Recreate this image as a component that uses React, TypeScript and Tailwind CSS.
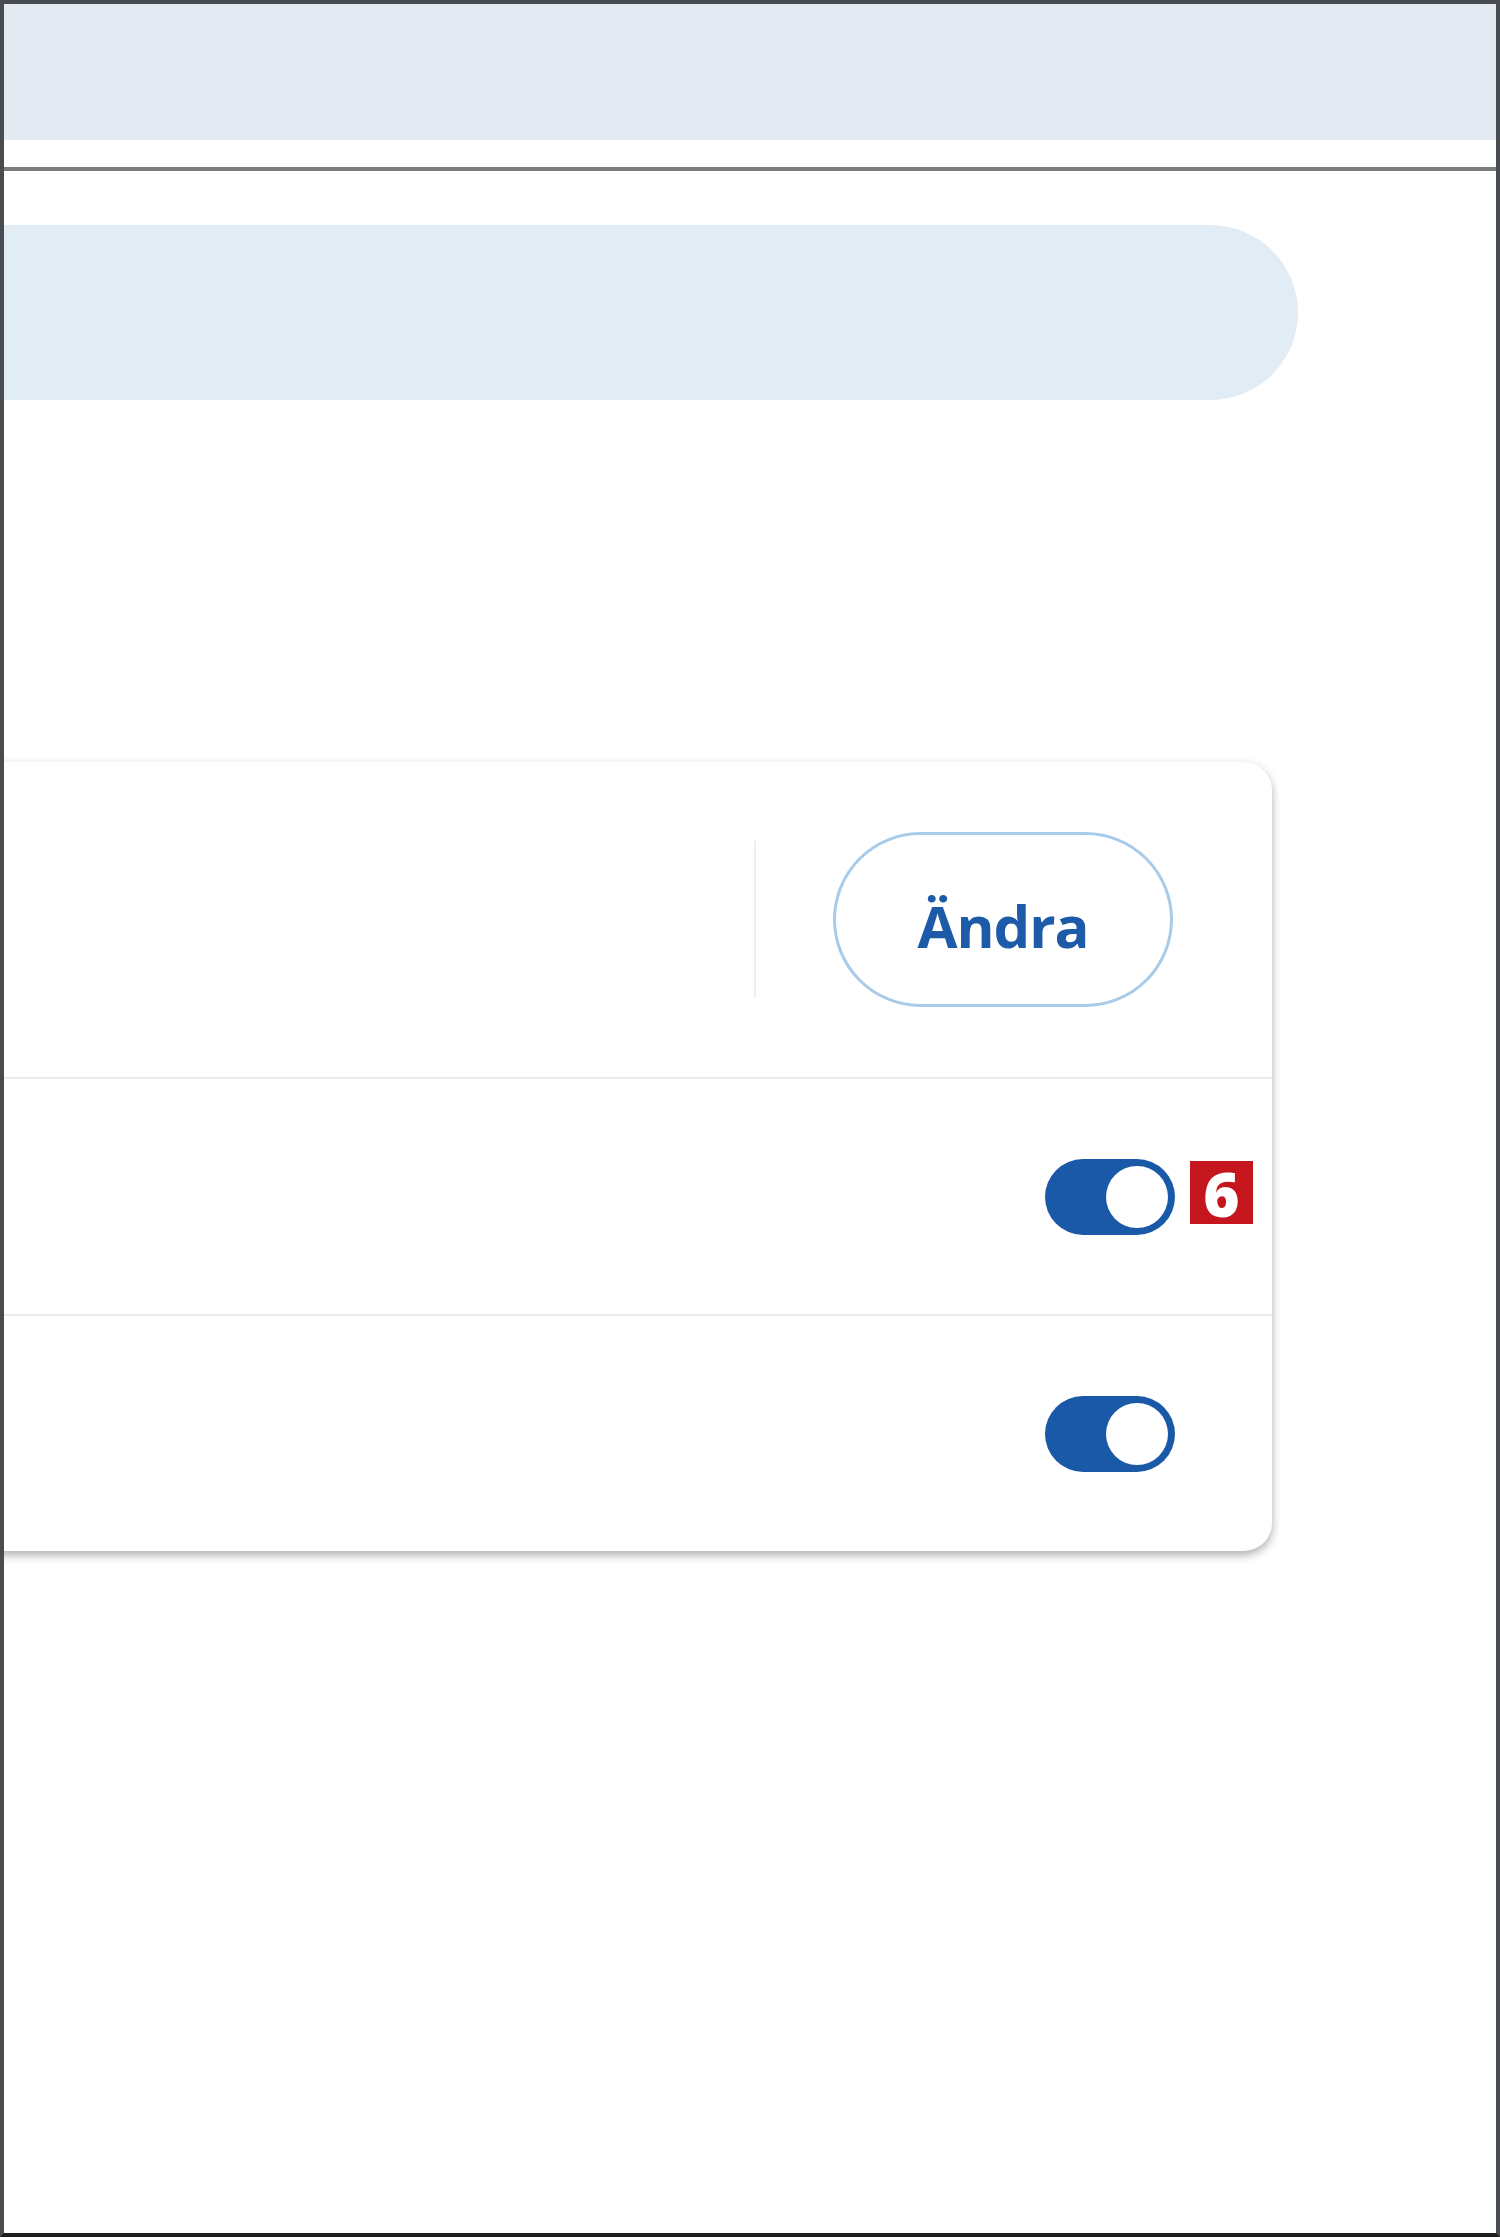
import React from "react";

function Toggle({ badge }: { badge?: string }) {
  return (
    <div className="relative w-[130px] h-[76px] rounded-full bg-[#1a58a8] flex items-center justify-end pr-[7px]">
      <div className="w-[62px] h-[62px] rounded-full bg-white" />
      {badge && (
        <div className="absolute left-[145px] top-[2px] w-[63px] h-[63px] bg-[#c5161d] flex items-center justify-center pt-[2px] text-white text-[62px] font-extrabold leading-none [font-family:'Open_Sans','Liberation_Sans',sans-serif]">
          {badge}
        </div>
      )}
    </div>
  );
}

export default function App() {
  return (
    <div className="w-[1500px] h-[2237px] bg-white border-4 border-[#484c51] border-b-[#1e1e1e] overflow-hidden flex flex-col [font-family:'Open_Sans','Liberation_Sans',sans-serif]">
      <div className="h-[136px] shrink-0 bg-[#e3eaf2]" />
      <div className="mt-[27px] h-[4px] shrink-0 bg-[#7c7c7c]" />
      <div className="mt-[54px] h-[175px] w-[1394px] -ml-[100px] shrink-0 rounded-full bg-[#e1ecf5]" />
      <div className="mt-[362px] -ml-[100px] w-[1368px] shrink-0 rounded-[28px] bg-white shadow-[0_4px_10px_rgba(0,0,0,0.32)] flex flex-col">
        <div className="h-[315px] flex items-center justify-end pr-[99px]">
          <div className="w-[2px] h-[157px] bg-[#eeeeee] mr-[77px]" />
          <button className="w-[340px] h-[175px] rounded-full border-[3px] border-[#a8cbea] bg-white text-[#1d5aa8] text-[58px] font-bold tracking-[-1px] leading-none flex items-center justify-center pt-[12px]">
            Ändra
          </button>
        </div>
        <div className="h-[2px] bg-[#ebebeb]" />
        <div className="h-[235px] flex items-center justify-end pr-[97px]">
          <Toggle badge="6" />
        </div>
        <div className="h-[2px] bg-[#ebebeb]" />
        <div className="h-[235px] flex items-center justify-end pr-[97px]">
          <Toggle />
        </div>
      </div>
    </div>
  );
}
